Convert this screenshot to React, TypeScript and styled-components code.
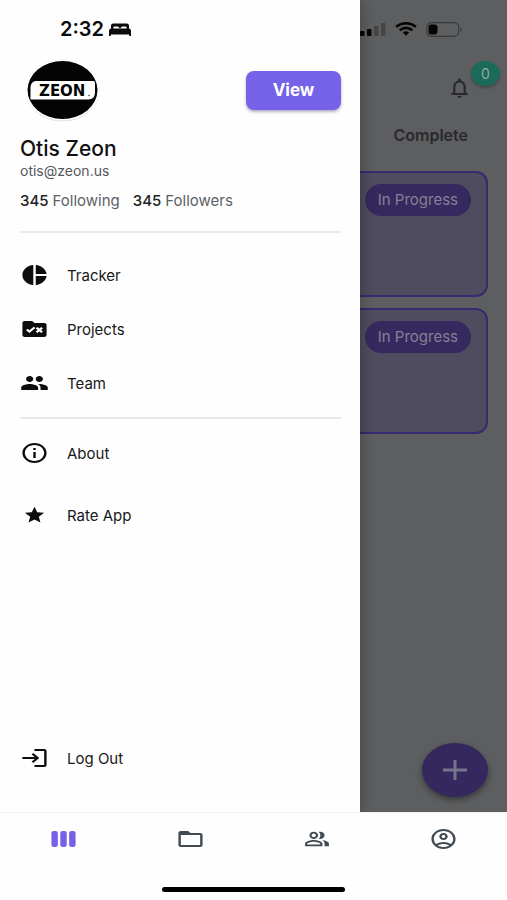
import React from "react";
import styled, { createGlobalStyle } from "styled-components";
import {
  MdPieChart,
  MdRuleFolder,
  MdPeople,
  MdInfoOutline,
  MdStar,
  MdLogin,
  MdViewWeek,
  MdFolderOpen,
  MdOutlinePeopleAlt,
  MdOutlineAccountCircle,
  MdNotificationsNone,
} from "react-icons/md";

const GlobalStyle = createGlobalStyle`
  *, *::before, *::after { box-sizing: border-box; }
  body { margin: 0; background: #fefefe; }
  body, button { font-family: "Inter", "Liberation Sans", sans-serif; }
`;

const Screen = styled.div`
  display: flex;
  flex-direction: column;
  min-height: 100vh;
  background: #fefefe;
`;

const Stage = styled.div`
  position: relative;
  display: flex;
  flex-direction: column;
  flex: 1;
  overflow: hidden;
`;

/* Board, shown dimmed behind the open drawer */
const Board = styled.main`
  display: flex;
  flex-direction: column;
  align-items: flex-end;
  flex: 1;
  padding: 0 19px 15px;
  background: #5d5e5f;
`;

const DeviceStatus = styled.div`
  display: flex;
  align-items: center;
  gap: 9px;
  height: 58px;
  padding-right: 25px;
`;

const BellButton = styled.button`
  position: relative;
  display: flex;
  margin: 18px 16px 0 0;
  padding: 0;
  border: 0;
  background: none;
  color: #28292d;

  svg {
    width: 25px;
    height: 24px;
  }
`;

const Badge = styled.span`
  position: absolute;
  left: 24px;
  top: -15px;
  width: 29px;
  height: 25px;
  border-radius: 50%;
  background: #1b6b5a;
  color: #8fa9a3;
  font-size: 14px;
  line-height: 25px;
  text-align: center;
  box-shadow: 0 2px 3px rgba(0, 0, 0, 0.25);
`;

const ColumnTitle = styled.h2`
  margin: 25px 20px 26px 0;
  color: #29292d;
  font-size: 16px;
  line-height: 20px;
  font-weight: 600;
`;

const Card = styled.article`
  display: flex;
  justify-content: flex-end;
  align-items: flex-start;
  width: 100%;
  height: 126px;
  margin-bottom: 11px;
  padding: 11px 15px;
  border: 2px solid #362a71;
  border-radius: 12px;
  background: #4e4c5e;
`;

const Pill = styled.span`
  padding: 0 13px;
  border-radius: 16px;
  background: #36295f;
  color: #858094;
  font-size: 15px;
  line-height: 32px;
`;

const AddButton = styled.button`
  display: flex;
  align-items: center;
  justify-content: center;
  width: 66px;
  height: 54px;
  margin-top: auto;
  padding: 0;
  border: 0;
  border-radius: 50%;
  background: #35285f;
  color: #77738a;
  box-shadow: 0 3px 6px rgba(0, 0, 0, 0.4);
`;

const Drawer = styled.aside`
  position: absolute;
  inset: 0 auto 0 0;
  display: flex;
  flex-direction: column;
  width: 71%;
  padding: 0 19px 33px 20px;
  background: #fefefe;
  box-shadow: 0 0 14px rgba(0, 0, 0, 0.3);
`;

const Clock = styled.div`
  display: flex;
  align-items: center;
  gap: 5px;
  height: 58px;
  padding-left: 40px;
  color: #0b0b0b;
  font-size: 20px;
  font-weight: 600;
`;

const Profile = styled.header`
  display: flex;
  align-items: center;
  justify-content: space-between;
  height: 64px;
  padding-left: 4px;
`;

const ViewButton = styled.button`
  width: 95px;
  height: 39px;
  border: 0;
  border-radius: 8px;
  background: #7562e8;
  color: #fff;
  font-size: 17px;
  font-weight: 700;
  box-shadow: 0 2px 3px rgba(40, 30, 90, 0.35);
`;

const Name = styled.h1`
  margin: 14px 0 0;
  color: #111;
  font-size: 21px;
  line-height: 26px;
  font-weight: 500;
`;

const Email = styled.p`
  margin: 0;
  color: #55595e;
  font-size: 14px;
  line-height: 17px;
`;

const Stats = styled.div`
  display: flex;
  gap: 13px;
  margin: 12px 0 20px;
  color: #5c6167;
  font-size: 15px;
  line-height: 20px;
`;

const Count = styled.b`
  margin-right: 4px;
  color: #222;
  font-weight: 500;
`;

const Divider = styled.hr`
  width: 100%;
  margin: 0;
  border: 0;
  border-top: 2px solid #e9eaeb;
`;

const Menu = styled.nav<{ $top: number; $gap: number }>`
  display: flex;
  flex-direction: column;
  gap: ${(p) => p.$gap}px;
  padding: ${(p) => p.$top}px 0 22px;
`;

const MenuLink = styled.a<{ $small?: boolean }>`
  display: grid;
  grid-template-columns: 28px auto;
  align-items: center;
  justify-content: start;
  column-gap: 19px;
  height: 24px;
  color: #17181a;
  font-size: 15px;
  text-decoration: none;

  svg {
    justify-self: center;
    width: ${(p) => (p.$small ? 23 : 29)}px;
    height: ${(p) => (p.$small ? 20 : 24)}px;
    color: #0c0d0e;
  }
`;

const LogOut = styled.div`
  margin-top: auto;
  padding-bottom: 9px;
`;

const TabBar = styled.nav`
  display: grid;
  grid-template-columns: repeat(4, 1fr);
  height: 75px;
  padding-top: 14px;
  border-top: 1px solid #f1f2f2;
`;

const Tab = styled.a<{ $active?: boolean; $compact?: boolean }>`
  display: flex;
  align-items: center;
  justify-content: center;
  height: 24px;
  color: ${(p) => (p.$active ? "#7562e8" : "#414a52")};

  svg {
    width: ${(p) => (p.$compact ? 26 : 29)}px;
    height: ${(p) => (p.$compact ? 22 : 24)}px;
  }
`;

const HomeIndicator = styled.div`
  width: 36%;
  height: 5px;
  margin: 0 auto 8px;
  border-radius: 3px;
  background: #000;
`;

const BedIcon = () => (
  <svg width="22" height="13" viewBox="0 0 22 13" aria-hidden="true">
    <path d="M2 6V2.500Q2 .5 4.200.5h13.600Q20 .5 20 2.500V6h-2.300V4.800Q17.700 3.500 16 3.500h-2.500Q12 3.500 11.700 5h-1.400Q10 3.500 8.500 3.500H6Q4.300 3.500 4.300 4.800V6z" fill="#0b0b0b" />
    <path d="M2.500 5.500h17q2.500 0 2.500 2.300V13h-1.800v-1.500H1.800V13H0V7.800q0-2.300 2.500-2.300z" fill="#0b0b0b" />
  </svg>
);

const SignalIcon = () => (
  <svg width="33" height="13" viewBox="0 0 33 13" aria-hidden="true">
    <rect x="0" y="9" width="4" height="4" rx="1" fill="#050505" />
    <rect x="7" y="8" width="4.500" height="5" rx="1" fill="#050505" />
    <rect x="14" y="6" width="4.500" height="7" rx="1" fill="#050505" />
    <rect x="21" y="3" width="4.500" height="10" rx="1" fill="#444546" />
    <rect x="28" y="0" width="4.500" height="13" rx="1" fill="#444546" />
  </svg>
);

const WifiIcon = () => (
  <svg width="22" height="14" viewBox="0 0 22 14" fill="none" stroke="#050505" strokeWidth="2.600" aria-hidden="true">
    <path d="M1 4.700Q11-2.300 21 4.700" />
    <path d="M4.700 8.200Q11 3.700 17.300 8.200" />
    <path d="M7.800 10.300Q11 8.200 14.200 10.300L11 13.800z" fill="#050505" stroke="none" />
  </svg>
);

const BatteryIcon = () => (
  <svg width="37" height="15" viewBox="0 0 37 15" aria-hidden="true">
    <rect x=".7" y=".7" width="32" height="13.600" rx="4.500" fill="none" stroke="#3a3b3c" strokeWidth="1.200" />
    <rect x="2.500" y="2.500" width="9" height="10" rx="3" fill="#050505" />
    <path d="M34.500 5.200q2.200 2.300 0 4.600z" fill="#333435" />
  </svg>
);

const Logo = () => (
  <svg width="77" height="64" viewBox="0 0 77 64" role="img" aria-label="Zeon">
    <ellipse cx="38.500" cy="32.500" rx="37" ry="31" fill="#e2e2e2" />
    <ellipse cx="38.500" cy="32" rx="37" ry="30.500" fill="#fff" />
    <ellipse cx="38.500" cy="32" rx="35" ry="29" fill="#040404" />
    <path d="M12 23h57.500q1.500 0 1.500 2v10q-.5 6-6.500 6.500H6.500V29q.5-5.500 5.500-6z" fill="#fff" />
    <text x="15" y="38" fontFamily="'DejaVu Sans', sans-serif" fontSize="15" fontWeight="700" fill="#050505">
      ZEON
    </text>
    <circle cx="65" cy="37.500" r=".8" fill="#444" />
  </svg>
);

const PlusIcon = () => (
  <svg width="26" height="22" viewBox="0 0 26 22" stroke="currentColor" strokeWidth="3" aria-hidden="true">
    <path d="M1 11h24M13 1v20" />
  </svg>
);

const stretch = { preserveAspectRatio: "none", "aria-hidden": true } as const;

const tasks = ["In Progress", "In Progress"];

const mainLinks = [
  { label: "Tracker", Icon: MdPieChart },
  { label: "Projects", Icon: MdRuleFolder },
  { label: "Team", Icon: MdPeople },
];

const tabs = [
  { label: "Board", Icon: MdViewWeek, active: true },
  { label: "Projects", Icon: MdFolderOpen },
  { label: "Team", Icon: MdOutlinePeopleAlt, compact: true },
  { label: "Account", Icon: MdOutlineAccountCircle },
];

export default function App() {
  return (
    <Screen>
      <GlobalStyle />
      <Stage>
        <Board>
          <DeviceStatus>
            <SignalIcon />
            <WifiIcon />
            <BatteryIcon />
          </DeviceStatus>
          <BellButton aria-label="Notifications">
            <MdNotificationsNone {...stretch} />
            <Badge>0</Badge>
          </BellButton>
          <ColumnTitle>Complete</ColumnTitle>
          {tasks.map((status, i) => (
            <Card key={i}>
              <Pill>{status}</Pill>
            </Card>
          ))}
          <AddButton aria-label="Add">
            <PlusIcon />
          </AddButton>
        </Board>
        <Drawer>
          <Clock>
            2:32
            <BedIcon />
          </Clock>
          <Profile>
            <Logo />
            <ViewButton>View</ViewButton>
          </Profile>
          <Name>Otis Zeon</Name>
          <Email>otis@zeon.us</Email>
          <Stats>
            <span><Count>345</Count>Following</span>
            <span><Count>345</Count>Followers</span>
          </Stats>
          <Divider />
          <Menu $top={30} $gap={30}>
            {mainLinks.map(({ label, Icon }) => (
              <MenuLink key={label} href="#">
                <Icon {...stretch} />
                {label}
              </MenuLink>
            ))}
          </Menu>
          <Divider />
          <Menu $top={22} $gap={38}>
            <MenuLink href="#">
              <MdInfoOutline {...stretch} />
              About
            </MenuLink>
            <MenuLink href="#" $small>
              <MdStar {...stretch} />
              Rate App
            </MenuLink>
          </Menu>
          <LogOut>
            <MenuLink href="#">
              <MdLogin {...stretch} />
              Log Out
            </MenuLink>
          </LogOut>
        </Drawer>
      </Stage>
      <TabBar>
        {tabs.map(({ label, Icon, active, compact }) => (
          <Tab key={label} href="#" aria-label={label} $active={active} $compact={compact}>
            <Icon {...stretch} />
          </Tab>
        ))}
      </TabBar>
      <HomeIndicator />
    </Screen>
  );
}
